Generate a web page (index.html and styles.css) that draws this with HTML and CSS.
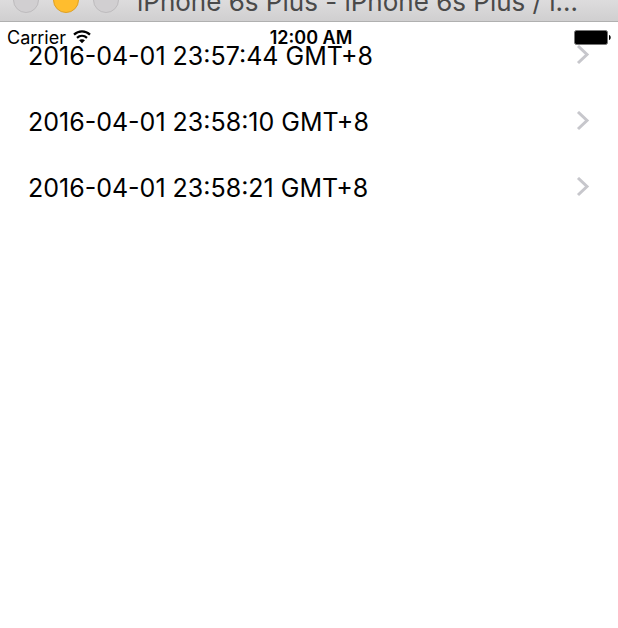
FILE: index.html
```
<!DOCTYPE html>
<html lang="en">
  <head>
    <meta charset="UTF-8" />
    <meta name="viewport" content="width=device-width, initial-scale=1.0" />
    <title>iPhone 6s Plus</title>
    <link rel="stylesheet" href="styles.css">
  </head>
  <body>
    <header class="titlebar">
      <div class="controls">
        <button type="button" class="control" aria-label="Close"></button>
        <button type="button" class="control minimize" aria-label="Minimize"></button>
        <button type="button" class="control" aria-label="Zoom"></button>
      </div>
      <div class="title">iPhone 6s Plus - iPhone 6s Plus / i…</div>
    </header>
    <main class="screen">
      <div class="status">
        <div class="carrier">
          <span>Carrier</span>
          <svg width="18" height="14" viewBox="0 0 18 14" aria-hidden="true">
            <path d="M1 4.6C5.5 0.3 12.5 0.3 17 4.6" fill="none" stroke="#000" stroke-width="2.2" />
            <path d="M4 7.9C6.9 5.2 11.1 5.2 14 7.9" fill="none" stroke="#000" stroke-width="2.2" />
            <path d="M6 10.2C7.8 8.8 10.2 8.8 12 10.2L9 13.2Z" />
          </svg>
        </div>
        <time class="clock">12:00 AM</time>
        <svg class="battery" width="37" height="15" viewBox="0 0 37 15" aria-hidden="true">
          <rect x="0.5" y="0.5" width="33" height="14" rx="2" fill="#000" stroke="#777" />
          <path d="M35 5C37.3 5.4 37.3 9.6 35 10Z" />
        </svg>
      </div>
      <ul class="list">
        <li class="row">
          <span>2016-04-01 23:57:44 GMT+8</span>
          <svg class="chevron" width="14" height="20" viewBox="0 0 14 20" aria-hidden="true"><path d="M2 1L11 9.5L2 18" /></svg>
        </li>
        <li class="row">
          <span>2016-04-01 23:58:10 GMT+8</span>
          <svg class="chevron" width="14" height="20" viewBox="0 0 14 20" aria-hidden="true"><path d="M2 1L11 9.5L2 18" /></svg>
        </li>
        <li class="row">
          <span>2016-04-01 23:58:21 GMT+8</span>
          <svg class="chevron" width="14" height="20" viewBox="0 0 14 20" aria-hidden="true"><path d="M2 1L11 9.5L2 18" /></svg>
        </li>
      </ul>
    </main>
  </body>
</html>
```
FILE: styles.css
```
* {
  box-sizing: border-box;
}
body {
  margin: 0;
  min-height: 100vh;
  background: #fff;
  color: #000;
  font-family: Inter, 'Liberation Sans', sans-serif;
}
/* Window title bar, scrolled partly out of view */
.titlebar {
  display: flex;
  align-items: flex-end;
  height: 22px;
  padding: 0 32px 8px 13px;
  overflow: hidden;
  background: linear-gradient(#dddcdd, #d0cfd0);
  border-bottom: 1px solid #b0b0b0;
}
.controls {
  display: flex;
  flex: none;
  gap: 14px;
  margin-right: 18px;
}
.control {
  width: 26px;
  height: 26px;
  padding: 0;
  border: 1px solid #bdbbbd;
  border-radius: 50%;
  background: #d1cfd1;
}
.minimize {
  border-color: #dfa023;
  background: #ffbd2e;
}
.title {
  flex: 1;
  color: #4a4a4a;
  font-size: 26px;
  line-height: 22px;
  white-space: nowrap;
}
.screen {
  position: relative;
}
/* The status bar floats over the list */
.status {
  position: absolute;
  top: 0;
  left: 0;
  right: 0;
  display: grid;
  grid-template-columns: 1fr auto 1fr;
  align-items: center;
  height: 32px;
  padding: 0 7px;
  font-size: 18px;
  line-height: 22px;
}
.carrier {
  display: flex;
  align-items: center;
  gap: 7px;
}
.carrier svg {
  margin-bottom: 2px;
}
.clock {
  margin-left: 4px;
  font-weight: 600;
}
.battery {
  justify-self: end;
  margin-bottom: 2px;
}
.list {
  margin: 0;
  padding: 1px 0 0;
  list-style: none;
}
.row {
  display: flex;
  align-items: center;
  justify-content: space-between;
  height: 66px;
  padding: 0 28px;
  font-size: 25px;
  line-height: 32px;
}
.chevron {
  margin-bottom: 2px;
  fill: none;
  stroke: #c7c7cc;
  stroke-width: 3;
}
```
